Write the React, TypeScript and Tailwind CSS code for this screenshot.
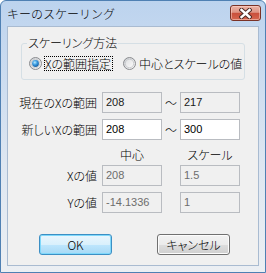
import React from "react";

function Radio({ checked }: { checked?: boolean }) {
  return (
    <svg width="13" height="13" viewBox="0 0 13 13" className="shrink-0">
      <defs>
        <linearGradient id="rring" x1="0" y1="0" x2="1" y2="1">
          <stop offset="0" stopColor="#c9ccd1" />
          <stop offset="1" stopColor="#f7f7f7" />
        </linearGradient>
        <linearGradient id="rin" x1="0" y1="0" x2="1" y2="1">
          <stop offset="0" stopColor="#dfe0e2" />
          <stop offset="1" stopColor="#fbfbfb" />
        </linearGradient>
        <radialGradient id="rdot" cx="0.4" cy="0.35" r="0.75">
          <stop offset="0" stopColor="#b8ecff" />
          <stop offset="0.45" stopColor="#3a9ae0" />
          <stop offset="1" stopColor="#0f4f8f" />
        </radialGradient>
      </defs>
      <circle cx="6.5" cy="6.5" r="6" fill="url(#rring)" stroke="#8a8c8f" strokeWidth="1" />
      <circle cx="6.5" cy="6.5" r="4.2" fill="url(#rin)" stroke="#c4c6c9" strokeWidth="0.8" />
      {checked && <circle cx="6.5" cy="6.5" r="3.4" fill="url(#rdot)" />}
    </svg>
  );
}

function Box({
  value,
  kind,
}: {
  value: string;
  kind: "ro" | "edit" | "dis";
}) {
  const cls =
    kind === "edit"
      ? "bg-white text-black"
      : kind === "ro"
      ? "bg-[#f0f0f0] text-[#1a1a1a]"
      : "bg-[#f0f0f0] text-[#6d6d6d]";
  return (
    <div
      className={`w-[60px] h-[21px] border border-[#b9bcc1] flex items-center pl-[3px] font-['Liberation_Sans',sans-serif] font-normal text-[11px] leading-[13px] ${cls}`}
    >
      {value}
    </div>
  );
}

function Row({
  label,
  a,
  b,
  kind,
  tilde,
}: {
  label: string;
  a: string;
  b: string;
  kind: "ro" | "edit" | "dis";
  tilde?: boolean;
}) {
  return (
    <div className="flex items-center h-[21px]">
      <div className="w-[89px] text-right text-[12px] leading-[14px]">{label}</div>
      <div className="ml-[5px]">
        <Box value={a} kind={kind} />
      </div>
      <div className="w-[18px] text-center text-[12px] leading-[14px]">{tilde ? "～" : ""}</div>
      <Box value={b} kind={kind} />
    </div>
  );
}

export default function App() {
  return (
    <div className="w-[266px] h-[273px] bg-white">
      <div className="w-[266px] h-[273px] flex flex-col border border-[#4f80b3] rounded-t-[6px] bg-[linear-gradient(180deg,#bcd3ee_0px,#c3d7ef_30px,#dde6f1_160px,#eceff3_273px)] font-['Noto_Sans_CJK_JP',sans-serif] font-light text-black">
        <div className="h-[25px] flex items-start shrink-0">
          <span className="ml-[6px] mt-[5px] text-[12px] leading-[16px]">キーのスケーリング</span>
          <div className="ml-auto mr-[4px] mt-[4px] w-[31px] h-[16px] rounded-[3px] border border-[#7a3226] bg-[linear-gradient(180deg,#ecb3a6_0%,#de9484_45%,#c9503c_52%,#d5664f_100%)] shadow-[inset_0_0_0_1px_rgba(255,220,210,0.5)] flex items-center justify-center">
            <svg width="13" height="11" viewBox="0 0 13 11">
              <path d="M2.5 2 L10.5 9 M10.5 2 L2.5 9" stroke="#4d2b27" strokeWidth="4.4" strokeLinecap="square" />
              <path d="M2.5 2 L10.5 9 M10.5 2 L2.5 9" stroke="#ffffff" strokeWidth="2.4" strokeLinecap="square" />
            </svg>
          </div>
        </div>
        <div className="mx-[6px] mb-[6px] flex-1 border border-[#a9bbd1] bg-[#f0f0f0] flex flex-col [font-feature-settings:'palt'] text-[12px] leading-[14px]">
          <fieldset className="mt-[9px] mx-[13px] border border-[#d5dfe5] rounded-[3px] pb-[8px] min-w-0">
            <legend className="ml-[5px] px-[1px] text-[12px] leading-[14px]">スケーリング方法</legend>
            <div className="flex items-center h-[16px] mt-[5px] pl-[7px]">
              <Radio checked />
              <div className="ml-[2px] h-[15px] border border-dotted border-black flex items-center pr-[1px]">
                <span className="leading-[13px]">Xの範囲指定</span>
              </div>
              <div className="ml-[10px]">
                <Radio />
              </div>
              <span className="ml-[3px] leading-[13px]">中心とスケールの値</span>
            </div>
          </fieldset>

          <div className="mt-[12px] flex flex-col gap-[6px]">
            <Row label="現在のXの範囲" a="208" b="217" kind="ro" tilde />
            <Row label="新しいXの範囲" a="208" b="300" kind="edit" tilde />
          </div>

          <div className="mt-[8px] h-[14px] flex pl-[94px]">
            <div className="w-[60px] text-center">中心</div>
            <div className="w-[18px]" />
            <div className="w-[60px] text-center">スケール</div>
          </div>

          <div className="mt-[3px] flex flex-col gap-[6px]">
            <Row label="Xの値" a="208" b="1.5" kind="dis" />
            <Row label="Yの値" a="-14.1336" b="1" kind="dis" />
          </div>

          <div className="mt-[21px] flex pl-[31px] gap-[45px]">
            <div className="w-[73px] h-[21px] rounded-[3px] border border-[#3c8fc4] shadow-[inset_0_0_0_1px_#7fd8fb] bg-[linear-gradient(180deg,#eaf6fd_0%,#d9f0fc_50%,#bee6fd_51%,#a7d9f5_100%)] flex items-center justify-center text-[12px] leading-[14px]">
              OK
            </div>
            <div className="w-[73px] h-[21px] rounded-[3px] border border-[#707070] shadow-[inset_0_0_0_1px_#fcfcfc] bg-[linear-gradient(180deg,#f2f2f2_0%,#ebebeb_50%,#dddddd_51%,#cfcfcf_100%)] flex items-center justify-center text-[12px] leading-[14px]">
              キャンセル
            </div>
          </div>
        </div>
      </div>
    </div>
  );
}
